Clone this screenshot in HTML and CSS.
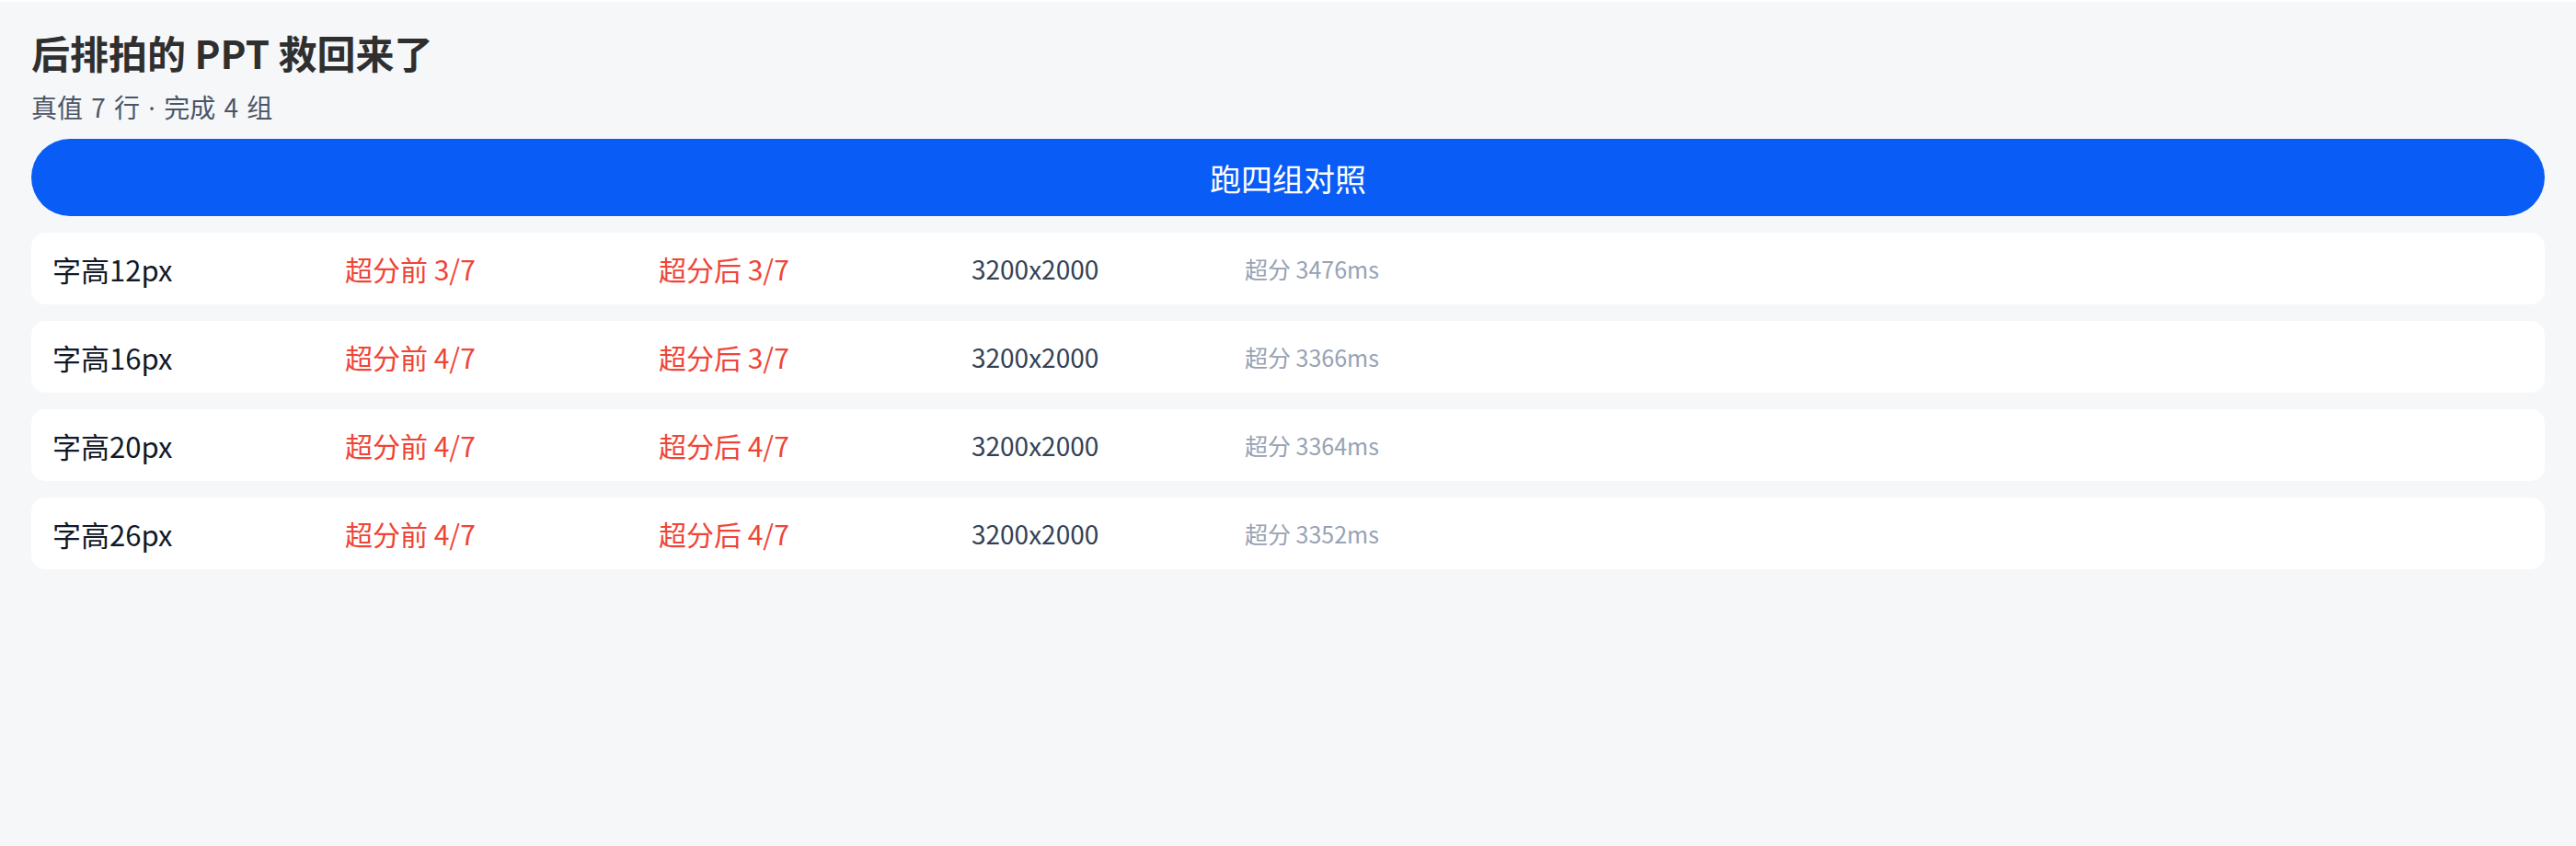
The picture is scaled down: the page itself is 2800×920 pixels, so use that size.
FILE: index.html
```html
<!DOCTYPE html>
<html lang="zh-CN">
<head>
    <meta charset="UTF-8">
    <title>后排拍的 PPT 救回来了</title>
    <link rel="stylesheet" href="styles.css">
</head>
<body>

    <div class="page">
        <h1 class="title">后排拍的 PPT 救回来了</h1>
        <p class="subtitle">真值 7 行 <span class="dot">·</span> 完成 4 组</p>

        <button class="run-btn">跑四组对照</button>

        <!-- 四组对照结果 -->
        <div class="result-list">
            <div class="result-row">
                <span class="row-label">字高12px</span>
                <span class="row-score">超分前 3/7</span>
                <span class="row-score">超分后 3/7</span>
                <span class="row-size">3200x2000</span>
                <span class="row-time">超分 3476ms</span>
            </div>
            <div class="result-row">
                <span class="row-label">字高16px</span>
                <span class="row-score">超分前 4/7</span>
                <span class="row-score">超分后 3/7</span>
                <span class="row-size">3200x2000</span>
                <span class="row-time">超分 3366ms</span>
            </div>
            <div class="result-row">
                <span class="row-label">字高20px</span>
                <span class="row-score">超分前 4/7</span>
                <span class="row-score">超分后 4/7</span>
                <span class="row-size">3200x2000</span>
                <span class="row-time">超分 3364ms</span>
            </div>
            <div class="result-row">
                <span class="row-label">字高26px</span>
                <span class="row-score">超分前 4/7</span>
                <span class="row-score">超分后 4/7</span>
                <span class="row-size">3200x2000</span>
                <span class="row-time">超分 3352ms</span>
            </div>
        </div>
    </div>

</body>
</html>
```

FILE: styles.css
```css
 body {
     margin: 0;
     min-height: 100vh;
     background-color: #f6f7f9;
     border-top: 2px solid #fff;
     font-family: "Noto Sans CJK SC", "Noto Sans", sans-serif;
     box-sizing: border-box;
 }

 .page {
     padding: 27px 34px 34px;
 }

 .title {
     margin: 0;
     font-size: 42px;
     line-height: 56px;
     font-weight: bold;
     color: #2f2f2f;
 }

 .subtitle {
     margin: 12px 0 0;
     font-size: 28px;
     line-height: 38px;
     word-spacing: 3px;
     color: #4b5565;
 }

 /* 中点用西文字体，避免全角宽度 */
 .subtitle .dot {
     font-family: "Noto Sans", sans-serif;
 }

 /* 主按钮 */
 .run-btn {
     display: block;
     width: 100%;
     height: 84px;
     margin-top: 15px;
     border: none;
     border-radius: 42px;
     background-color: #0a5cf6;
     color: #fff;
     font-family: inherit;
     font-size: 34px;
     cursor: pointer;
 }

 .result-list {
     display: flex;
     flex-direction: column;
     gap: 18px;
     margin-top: 18px;
 }

 .result-row {
     display: grid;
     grid-template-columns: 318px 341px 340px 297px 1fr;
     align-items: center;
     height: 78px;
     padding: 0 23px;
     background-color: #fff;
     border-radius: 15px;
 }

 .row-label {
     font-size: 31px;
     color: #111827;
 }

 .row-score {
     font-size: 30px;
     color: #f04437;
 }

 .row-size {
     font-size: 28px;
     color: #334155;
 }

 .row-time {
     font-size: 25px;
     color: #98a2b3;
 }
```
